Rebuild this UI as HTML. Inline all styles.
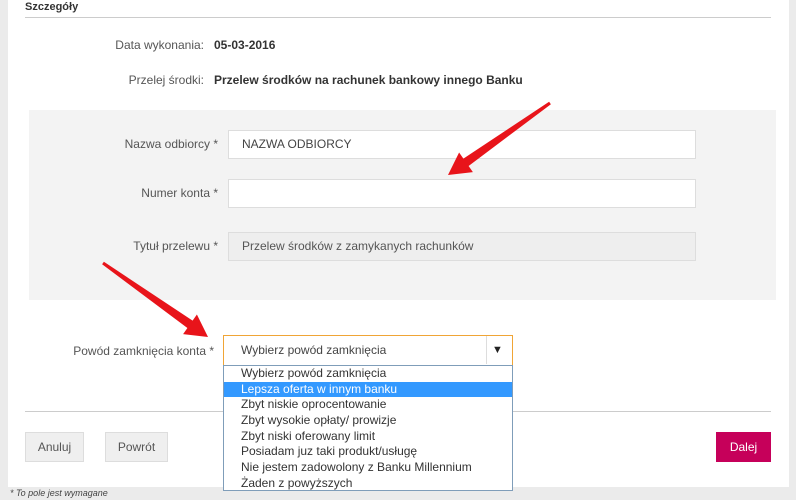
<!DOCTYPE html>
<html><head><meta charset="utf-8"><style>
*{margin:0;padding:0;box-sizing:border-box}
body{width:796px;height:500px;background:#ebebeb;font-family:"Liberation Sans",Arial,sans-serif;color:#333;position:relative;overflow:hidden;font-size:12px}
.a{position:absolute}
.card{left:8px;top:0;width:781px;height:487px;background:#fff}
.inp{background:#fff;border:1px solid #ddd;height:29px;width:468px;left:228px;padding-left:13px;line-height:27px;font-size:12px;color:#444}
.lbl{text-align:right;width:190px;font-size:12px;color:#555}
.btn{background:#efefef;border:1px solid #ddd;height:30px;line-height:28px;text-align:center;font-size:12px;color:#555}
.dd div{height:15.7px;line-height:15.7px;padding-left:17px;font-size:12px;color:#333}
</style></head><body>
<div class="a card"></div>
<div class="a" style="left:25px;top:1px;font-weight:bold;font-size:11px;color:#333">Szczegóły</div>
<div class="a" style="left:25px;top:17px;width:746px;height:1px;background:#ccc"></div>
<div class="a" style="left:0;top:38px;width:204px;text-align:right;color:#555">Data wykonania:</div>
<div class="a" style="left:214px;top:38px;font-weight:bold">05-03-2016</div>
<div class="a" style="left:0;top:73px;width:204px;text-align:right;color:#555">Przelej środki:</div>
<div class="a" style="left:214px;top:73px;font-weight:bold">Przelew środków na rachunek bankowy innego Banku</div>
<div class="a" style="left:29px;top:110px;width:747px;height:190px;background:#f3f3f3"></div>
<div class="a lbl" style="left:28px;top:137px">Nazwa odbiorcy *</div>
<div class="a inp" style="top:130px">NAZWA ODBIORCY</div>
<div class="a lbl" style="left:28px;top:186px">Numer konta *</div>
<div class="a inp" style="top:179px"></div>
<div class="a lbl" style="left:28px;top:239px">Tytuł przelewu *</div>
<div class="a inp" style="top:232px;background:#eee;color:#555">Przelew środków z zamykanych rachunków</div>
<div class="a lbl" style="left:24px;top:344px">Powód zamknięcia konta *</div>
<div class="a" style="left:223px;top:335px;width:290px;height:31px;border:1.5px solid #f0a536;background:#fff;padding-left:17px;line-height:29px;color:#444">Wybierz powód zamknięcia
<div class="a" style="left:262px;top:0;width:1px;height:28px;background:#ddd"></div>
<div class="a" style="left:268px;top:0;font-size:11px;color:#222">▼</div></div>
<div class="a" style="left:25px;top:411px;width:746px;height:1px;background:#ccc"></div>
<div class="a btn" style="left:25px;top:432px;width:59px">Anuluj</div>
<div class="a btn" style="left:105px;top:432px;width:63px">Powrót</div>
<div class="a" style="left:716px;top:432px;width:55px;height:30px;background:#c6005a;color:#fff;text-align:center;line-height:30px">Dalej</div>
<div class="a dd" style="left:223px;top:365px;width:290px;height:126px;background:#fff;border:1px solid #7f9db9;padding-top:0">
<div>Wybierz powód zamknięcia</div>
<div style="background:#3399ff;color:#fff">Lepsza oferta w innym banku</div>
<div>Zbyt niskie oprocentowanie</div>
<div>Zbyt wysokie opłaty/ prowizje</div>
<div>Zbyt niski oferowany limit</div>
<div>Posiadam juz taki produkt/usługę</div>
<div>Nie jestem zadowolony z Banku Millennium</div>
<div>Żaden z powyższych</div>
</div>
<div class="a" style="left:10px;top:488px;font-size:9px;font-style:italic;color:#444">* To pole jest wymagane</div>
<svg class="a" style="left:0;top:0" width="796" height="500">
<polygon fill="#e8141a" points="550.9,104.2 468.6,166 472.9,172.1 448,175 459.1,152.5 463.4,158.6 549.1,101.8"/>
<polygon fill="#e8141a" points="102.1,264.2 187.4,328 183.1,334.1 208,337 196.9,314.5 192.6,320.6 103.9,261.8"/>
</svg>
</body></html>
